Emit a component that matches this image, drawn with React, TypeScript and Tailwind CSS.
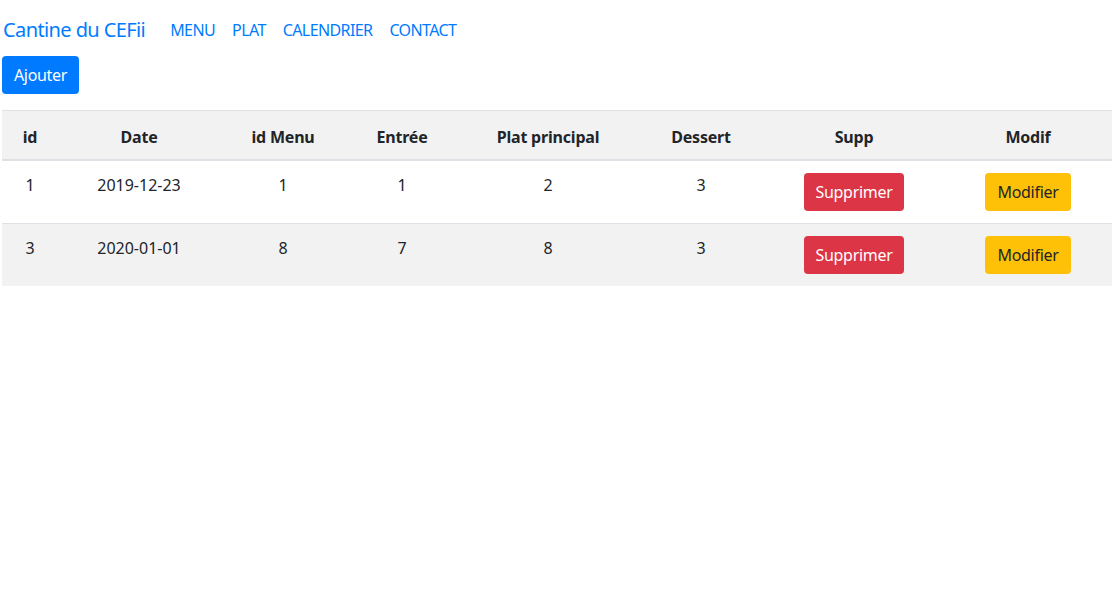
import React from "react";

const rows = [
  { id: "1", date: "2019-12-23", menu: "1", entree: "1", plat: "2", dessert: "3" },
  { id: "3", date: "2020-01-01", menu: "8", entree: "7", plat: "8", dessert: "3" },
];

export default function App() {
  const font = { fontFamily: '"Noto Sans", "Open Sans", sans-serif' };
  const th = "px-[12px] pt-[14px] pb-[10px] border-b-2 border-[#dee2e6] font-bold tracking-[-0.2px]";
  return (
    <div className="min-h-[597px] bg-white text-[#212529] px-[2px]" style={font}>
      <nav className="flex items-center h-[60px] pl-[1px]">
        <a className="text-[20px] leading-[30px] text-[#007bff] mr-[25px] tracking-[-0.6px]">Cantine du CEFii</a>
        <ul className="flex gap-[17px] text-[16px] leading-[24px] text-[#007bff] tracking-[-0.6px]">
          <li>MENU</li>
          <li>PLAT</li>
          <li>CALENDRIER</li>
          <li>CONTACT</li>
        </ul>
      </nav>
      <div>
        <button className="h-[38px] w-[77px] rounded-[4px] bg-[#007bff] text-white text-[16px] leading-[24px] -mt-[4px] tracking-[-0.3px]">
          Ajouter
        </button>
      </div>
      <table className="mt-[16px] w-[1110px] border-collapse text-[16px] leading-[24px] text-center">
        <thead>
          <tr className="bg-[#f2f2f2] border-t border-[#dee2e6]">
            <th className={`w-[56px] ${th}`}>id</th>
            <th className={`w-[162px] ${th}`}>Date</th>
            <th className={`w-[126px] ${th}`}>id Menu</th>
            <th className={`w-[112px] ${th}`}>Entrée</th>
            <th className={`w-[180px] ${th}`}>Plat principal</th>
            <th className={`w-[126px] ${th}`}>Dessert</th>
            <th className={`w-[180px] ${th}`}>Supp</th>
            <th className={`w-[168px] ${th}`}>Modif</th>
          </tr>
        </thead>
        <tbody>
          {rows.map((r, i) => (
            <tr key={i} className={`${i % 2 === 1 ? "bg-[#f2f2f2]" : "bg-white"} border-t border-[#dee2e6]`}>
              <td className="p-[12px] align-top">{r.id}</td>
              <td className="p-[12px] align-top">{r.date}</td>
              <td className="p-[12px] align-top">{r.menu}</td>
              <td className="p-[12px] align-top">{r.entree}</td>
              <td className="p-[12px] align-top">{r.plat}</td>
              <td className="p-[12px] align-top">{r.dessert}</td>
              <td className="p-[12px] align-top">
                <button className="h-[38px] w-[100px] rounded-[4px] bg-[#dc3545] text-white text-[16px] leading-[24px] tracking-[-0.3px]">
                  Supprimer
                </button>
              </td>
              <td className="p-[12px] align-top">
                <button className="h-[38px] w-[86px] rounded-[4px] bg-[#ffc107] text-[#212529] text-[16px] leading-[24px] tracking-[-0.3px]">
                  Modifier
                </button>
              </td>
            </tr>
          ))}
        </tbody>
      </table>
    </div>
  );
}
